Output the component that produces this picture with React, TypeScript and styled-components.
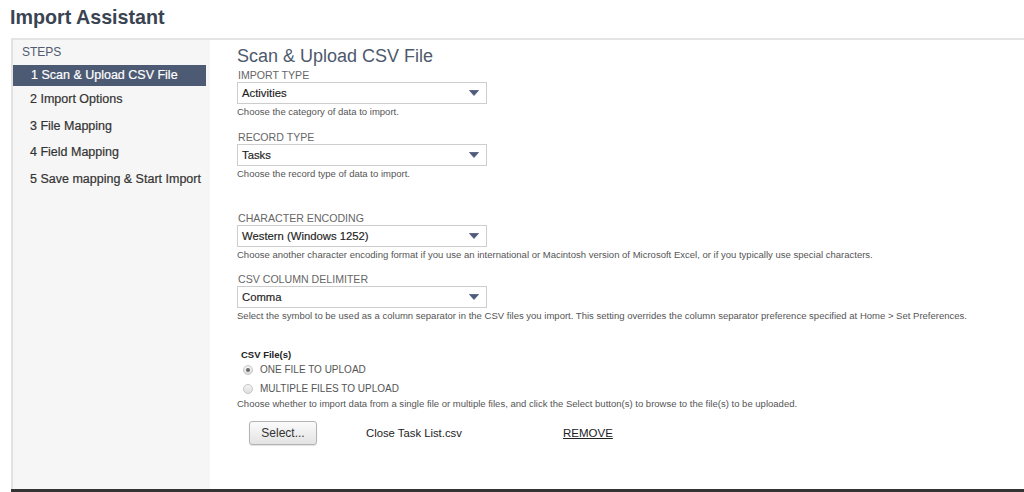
import React from "react";
import styled, { createGlobalStyle } from "styled-components";

const Global = createGlobalStyle`
  html, body { margin: 0; padding: 0; background: #ffffff; }
  body { font-family: "Liberation Sans", Arial, sans-serif; color: #333; }
  * { box-sizing: border-box; }
`;

const Page = styled.div`
  width: 1024px;
  height: 492px;
  overflow: hidden;
  display: flex;
  flex-direction: column;
`;

const Header = styled.h1`
  margin: 0;
  height: 38px;
  padding: 0 0 4px 10px;
  font-size: 19.7px;
  line-height: 34px;
  font-weight: bold;
  color: #3a4352;
`;

const Frame = styled.div`
  flex: 1;
  margin-left: 11px;
  display: flex;
  border-top: 2px solid #e4e4e4;
  border-bottom: 3px solid #333333;
`;

const Sidebar = styled.nav`
  width: 199px;
  flex: none;
  background: #f6f6f6;
  border-left: 2px solid #e2e2e2;
  padding-top: 5px;
`;

const StepsTitle = styled.div`
  font-size: 12px;
  line-height: 14px;
  padding-left: 9px;
  color: #4f5b6e;
  margin-bottom: 6px;
`;

const StepList = styled.ul`
  list-style: none;
  margin: 0;
  padding: 0;
`;

const Step = styled.li<{ $active?: boolean }>`
  font-size: 12.5px;
  white-space: nowrap;
  -webkit-text-stroke: 0.2px currentColor;
  ${(p) =>
    p.$active
      ? `
    height: 21px;
    line-height: 21px;
    margin-right: 4px;
    padding-left: 18px;
    background: #4d5a73;
    color: #ffffff;
  `
      : `
    height: 26.5px;
    line-height: 26.5px;
    padding-left: 17px;
    color: #333333;
  `}
`;

const Main = styled.main`
  flex: 1;
  padding: 5px 0 0 27px;
  display: flex;
  flex-direction: column;
  align-items: flex-start;
`;

const Title = styled.h2`
  margin: 0 0 2px 0;
  font-size: 18px;
  line-height: 22px;
  font-weight: normal;
  color: #4d596c;
`;

const Field = styled.div<{ $gap?: number }>`
  margin-top: ${(p) => p.$gap ?? 0}px;
  display: flex;
  flex-direction: column;
`;

const Label = styled.div`
  font-size: 10.6px;
  line-height: 13px;
  color: #666666;
  text-transform: uppercase;
  padding-left: 1px;
`;

const SelectBox = styled.div`
  width: 250px;
  height: 22px;
  border: 1px solid #cdcdcd;
  background: #ffffff;
  display: flex;
  align-items: center;
  justify-content: space-between;
  padding: 0 7px 0 4px;
  font-size: 11.3px;
  color: #222;
  -webkit-text-stroke: 0.15px currentColor;
`;

const Help = styled.div`
  margin-top: 2px;
  font-size: 9.52px;
  line-height: 12px;
  color: #555555;
  white-space: nowrap;
`;

const FileTitle = styled.div`
  margin: 27px 0 0 4px;
  font-size: 9.5px;
  line-height: 11px;
  font-weight: bold;
  color: #222;
`;

const RadioRow = styled.label`
  height: 19px;
  display: flex;
  align-items: center;
  padding-left: 6px;
  gap: 7px;
  font-size: 10px;
  color: #555;
`;

const RadioDot = styled.span<{ $checked?: boolean }>`
  width: 10px;
  height: 10px;
  border-radius: 50%;
  border: 1px solid #c6c6c6;
  background: linear-gradient(#f4f4f4, #dedede);
  display: flex;
  align-items: center;
  justify-content: center;
  &::after {
    content: "";
    width: 4px;
    height: 4px;
    border-radius: 50%;
    background: ${(p) => (p.$checked ? "#6a6a6a" : "transparent")};
  }
`;

const FileHelp = styled(Help)`
  margin-top: 0;
`;

const UploadRow = styled.div`
  margin-top: 11px;
  display: flex;
  align-items: center;
`;

const Button = styled.button`
  margin-left: 12px;
  width: 68px;
  height: 24px;
  border: 1px solid #b3b3b3;
  border-radius: 3px;
  background: linear-gradient(#fbfbfb, #e3e3e3);
  box-shadow: 0 1px 1px rgba(0, 0, 0, 0.12);
  font-family: "Liberation Sans", Arial, sans-serif;
  font-size: 12px;
  color: #333;
  padding: 0;
`;

const FileName = styled.span`
  margin-left: 49px;
  width: 197px;
  font-size: 11.3px;
  color: #222;
`;

const Remove = styled.a`
  font-size: 11.5px;
  color: #222;
  text-decoration: underline;
`;

const Arrow = () => (
  <svg width="10" height="6" viewBox="0 0 10 6">
    <path d="M0.5 0.5 H9.5 L5 5.5 Z" fill="#4d5a7a" stroke="#4d5a7a" strokeLinejoin="round" strokeWidth="0.8" />
  </svg>
);

const fields = [
  { label: "Import Type", value: "Activities", help: "Choose the category of data to import.", gap: 0 },
  { label: "Record Type", value: "Tasks", help: "Choose the record type of data to import.", gap: 12.5 },
  {
    label: "Character Encoding",
    value: "Western (Windows 1252)",
    help: "Choose another character encoding format if you use an international or Macintosh version of Microsoft Excel, or if you typically use special characters.",
    gap: 32,
  },
  {
    label: "CSV Column Delimiter",
    value: "Comma",
    help: "Select the symbol to be used as a column separator in the CSV files you import. This setting overrides the column separator preference specified at Home > Set Preferences.",
    gap: 12.5,
  },
];

const steps = [
  "1 Scan & Upload CSV File",
  "2 Import Options",
  "3 File Mapping",
  "4 Field Mapping",
  "5 Save mapping & Start Import",
];

export default function App() {
  return (
    <Page>
      <Global />
      <Header>Import Assistant</Header>
      <Frame>
        <Sidebar>
          <StepsTitle>STEPS</StepsTitle>
          <StepList>
            {steps.map((s, i) => (
              <Step key={s} $active={i === 0}>
                {s}
              </Step>
            ))}
          </StepList>
        </Sidebar>
        <Main>
          <Title>Scan &amp; Upload CSV File</Title>
          {fields.map((f) => (
            <Field key={f.label} $gap={f.gap}>
              <Label>{f.label}</Label>
              <SelectBox>
                <span>{f.value}</span>
                <Arrow />
              </SelectBox>
              <Help>{f.help}</Help>
            </Field>
          ))}
          <FileTitle>CSV File(s)</FileTitle>
          <RadioRow>
            <RadioDot $checked />
            ONE FILE TO UPLOAD
          </RadioRow>
          <RadioRow>
            <RadioDot />
            MULTIPLE FILES TO UPLOAD
          </RadioRow>
          <FileHelp>
            Choose whether to import data from a single file or multiple files, and click the Select button(s) to browse to the file(s) to be uploaded.
          </FileHelp>
          <UploadRow>
            <Button>Select...</Button>
            <FileName>Close Task List.csv</FileName>
            <Remove>REMOVE</Remove>
          </UploadRow>
        </Main>
      </Frame>
    </Page>
  );
}
